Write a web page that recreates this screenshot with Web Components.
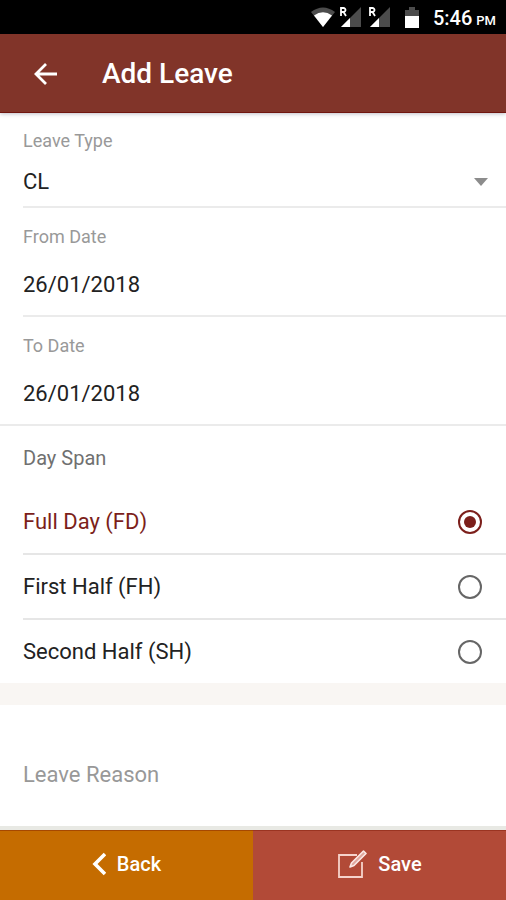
<!DOCTYPE html>
<html lang="en">
<head>
<meta charset="utf-8">
<meta name="viewport" content="width=device-width, initial-scale=1">
<title>Add Leave</title>
<style>
  html, body {
    margin: 0;
    background: #fff;
  }

  body {
    font-family: Roboto, "Liberation Sans", sans-serif;
    color: #222;
  }
</style>
</head>
<body>
<leave-page>
  <status-bar slot="top" time="5:46" period="PM"></status-bar>
  <app-header slot="top">Add Leave</app-header>

  <select-field label="Leave Type" options="CL"></select-field>
  <date-field label="From Date" value="26/01/2018"></date-field>
  <date-field label="To Date" value="26/01/2018" last></date-field>
  <radio-list label="Day Span" options="Full Day (FD)|First Half (FH)|Second Half (SH)"></radio-list>
  <reason-field label="Leave Reason"></reason-field>

  <action-button slot="actions" variant="back">
    <svg slot="icon" width="14" height="24" viewBox="0 0 14 24" aria-hidden="true">
      <path d="M13 2 3 12l10 10" fill="none" stroke="#fff" stroke-width="3.600"/>
    </svg>
    Back
  </action-button>
  <action-button slot="actions" variant="save">
    <svg slot="icon" width="30" height="28" viewBox="0 0 30 28" aria-hidden="true">
      <path d="M20 5H2v22h23V12" fill="none" stroke="#f6d3cb" stroke-width="1.800"/>
      <path d="m13 17 1.500-4L26.500 1l2.500 2.500-12 12z" fill="#e0a79d" stroke="#fbe9e5" stroke-width="1.600" stroke-linejoin="round"/>
    </svg>
    Save
  </action-button>
</leave-page>

<script>
class LeavePage extends HTMLElement {
  connectedCallback() {
    this.attachShadow({ mode: 'open' }).innerHTML = `
      <style>
        :host {
          display: flex;
          flex-direction: column;
          min-height: 100vh;
        }

        main {
          flex: 1;
          display: flex;
          flex-direction: column;
        }

        footer {
          display: flex;
          border-top: 4px solid #e8e9e4;
        }
      </style>
      <slot name="top"></slot>
      <main><slot></slot></main>
      <footer><slot name="actions"></slot></footer>`;
  }
}

class StatusBar extends HTMLElement {
  connectedCallback() {
    const signal = `
      <svg class="signal" width="22" height="20" viewBox="0 0 22 20">
        <path d="M22 0v20H2z" fill="#4c4c4c"/>
        <path d="M11 11v9H2z" fill="#fff"/>
        <path d="M0 0h10v11H0z" fill="#000"/>
        <path d="M2 9V1h2.500a2 2 0 0 1 0 4H2m2.500 0L7 9" fill="none" stroke="#fff" stroke-width="1.800"/>
      </svg>`;

    this.attachShadow({ mode: 'open' }).innerHTML = `
      <style>
        :host {
          display: flex;
          align-items: center;
          justify-content: flex-end;
          height: 34px;
          padding-right: 10px;
          background: #000;
          color: #fff;
        }

        .icons {
          display: flex;
          align-items: center;
          margin-right: 14px;
        }

        .signal {
          margin-left: 4px;
        }

        .signal + .signal {
          margin-left: 7px;
        }

        .battery {
          margin-left: 15px;
        }

        .time {
          display: flex;
          align-items: baseline;
          gap: 4px;
          padding-top: 2px;
          font-size: 20px;
          font-weight: 500;
        }

        small {
          font-size: 13px;
          font-weight: 500;
        }
      </style>
      <div class="icons" aria-hidden="true">
        <svg width="24" height="20" viewBox="0 0 24 20">
          <path d="M0 5Q12-4 24 5L12 20z" fill="#4c4c4c"/>
          <path d="M3 8.500Q12 2 21 8.500L12 20z" fill="#fff"/>
        </svg>
        ${signal}
        ${signal}
        <svg class="battery" width="14" height="21" viewBox="0 0 14 21">
          <path d="M0 9V3h4V0h6v3h4v6z" fill="#4c4c4c"/>
          <path d="M0 9h14v12H0z" fill="#fff"/>
        </svg>
      </div>
      <span class="time">${this.getAttribute('time')} <small>${this.getAttribute('period')}</small></span>`;
  }
}

class AppHeader extends HTMLElement {
  connectedCallback() {
    this.attachShadow({ mode: 'open' }).innerHTML = `
      <style>
        :host {
          display: flex;
          align-items: center;
          gap: 34px;
          height: 79px;
          padding: 0 24px;
          background: #813429;
          color: #fff;
          box-shadow: inset 0 -1px #70160f, 0 1px 4px rgba(0, 0, 40, 0.25);
        }

        button {
          display: flex;
          padding: 8px 10px;
          border: 0;
          background: none;
        }

        h1 {
          margin: 0;
          font-size: 28px;
          font-weight: 500;
        }
      </style>
      <button type="button" aria-label="Go back">
        <svg width="24" height="24" viewBox="0 0 24 24">
          <path d="M23 12H3M12 2 2 12l10 10" fill="none" stroke="#fff" stroke-width="2.800"/>
        </svg>
      </button>
      <h1><slot></slot></h1>`;
  }
}

const fieldStyles = `
  :host {
    display: block;
    padding-left: 23px;
  }

  .field {
    display: flex;
    flex-direction: column;
    border-bottom: 2px solid #ebebeb;
  }

  label {
    font-size: 18px;
    line-height: 24px;
    color: #999;
  }

  input,
  select {
    box-sizing: border-box;
    width: 100%;
    margin: 0;
    padding: 4px 0 0;
    border: 0;
    background: none;
    color: inherit;
    font: inherit;
    font-size: 22px;
  }
`;

class SelectField extends HTMLElement {
  connectedCallback() {
    const options = this.getAttribute('options').split('|');
    this.attachShadow({ mode: 'open' }).innerHTML = `
      <style>
        ${fieldStyles}

        .field {
          padding-top: 16px;
        }

        .control {
          display: grid;
          align-items: center;
        }

        select,
        svg {
          grid-area: 1 / 1;
        }

        select {
          height: 53px;
          appearance: none;
        }

        svg {
          justify-self: end;
          margin: 4px 18px 0 0;
          pointer-events: none;
        }
      </style>
      <div class="field">
        <label for="value">${this.getAttribute('label')}</label>
        <div class="control">
          <select id="value">${options.map((name) => `<option>${name}</option>`).join('')}</select>
          <svg width="14" height="8" viewBox="0 0 14 8" aria-hidden="true">
            <path d="M0 0h14L7 8z" fill="#8c8c8c"/>
          </svg>
        </div>
      </div>`;
  }
}

class DateField extends HTMLElement {
  connectedCallback() {
    this.attachShadow({ mode: 'open' }).innerHTML = `
      <style>
        ${fieldStyles}

        .field {
          padding-top: 17px;
        }

        input {
          height: 66px;
        }

        :host([last]) {
          padding-left: 0;
        }

        :host([last]) .field {
          padding-left: 23px;
        }
      </style>
      <div class="field">
        <label for="value">${this.getAttribute('label')}</label>
        <input id="value" type="text" inputmode="numeric" value="${this.getAttribute('value')}">
      </div>`;
  }
}

class RadioList extends HTMLElement {
  connectedCallback() {
    const rows = this.getAttribute('options').split('|').map((name, i) => `
      <label>
        <span>${name}</span>
        <input type="radio" name="span" value="${name}" ${i === 0 ? 'checked' : ''}>
      </label>`);

    this.attachShadow({ mode: 'open' }).innerHTML = `
      <style>
        :host {
          display: block;
          padding-left: 23px;
          border-bottom: 22px solid #f9f6f3;
        }

        fieldset {
          margin: 0;
          padding: 0;
          border: 0;
          min-width: 0;
        }

        legend {
          padding: 20px 0;
          font-size: 20px;
          line-height: 24px;
          color: #707070;
        }

        label {
          display: flex;
          align-items: center;
          justify-content: space-between;
          height: 63px;
          padding-right: 24px;
          border-bottom: 2px solid #e6e6e6;
          font-size: 22px;
        }

        label:last-child {
          border-bottom: 0;
        }

        label:has(:checked) {
          color: #7c1f1b;
        }

        input {
          display: grid;
          place-content: center;
          box-sizing: border-box;
          width: 24px;
          height: 24px;
          margin: 0;
          border: 2px solid #666;
          border-radius: 50%;
          appearance: none;
        }

        input:checked {
          border-color: #7c1f1b;
        }

        input:checked::before {
          content: "";
          width: 12px;
          height: 12px;
          border-radius: 50%;
          background: #7c1f1b;
        }
      </style>
      <fieldset>
        <legend>${this.getAttribute('label')}</legend>
        ${rows.join('')}
      </fieldset>`;
  }
}

class ReasonField extends HTMLElement {
  connectedCallback() {
    const label = this.getAttribute('label');
    this.attachShadow({ mode: 'open' }).innerHTML = `
      <style>
        :host {
          display: flex;
          flex: 1;
          padding: 56px 23px 16px;
        }

        textarea {
          flex: 1;
          height: 48px;
          margin: 0;
          padding: 0;
          border: 0;
          outline: 0;
          resize: none;
          background: none;
          color: inherit;
          font: inherit;
          font-size: 22px;
          line-height: 28px;
        }

        textarea::placeholder {
          color: #989898;
        }
      </style>
      <textarea aria-label="${label}" placeholder="${label}"></textarea>`;
  }
}

class ActionButton extends HTMLElement {
  connectedCallback() {
    this.attachShadow({ mode: 'open' }).innerHTML = `
      <style>
        :host {
          display: flex;
          flex: 1;
          background: #c56c00;
        }

        :host([variant="save"]) {
          background: #b24a37;
        }

        button {
          flex: 1;
          display: flex;
          align-items: center;
          justify-content: center;
          gap: 11px;
          height: 70px;
          padding: 0 0 4px;
          border: 0;
          border-top: 1px solid rgba(120, 20, 0, 0.4);
          background: none;
          color: #fff;
          font: inherit;
          font-size: 20px;
          font-weight: 500;
          cursor: pointer;
        }
      </style>
      <button type="button">
        <slot name="icon"></slot>
        <span><slot></slot></span>
      </button>`;
  }
}

customElements.define('leave-page', LeavePage);
customElements.define('status-bar', StatusBar);
customElements.define('app-header', AppHeader);
customElements.define('select-field', SelectField);
customElements.define('date-field', DateField);
customElements.define('radio-list', RadioList);
customElements.define('reason-field', ReasonField);
customElements.define('action-button', ActionButton);
</script>
</body>
</html>
